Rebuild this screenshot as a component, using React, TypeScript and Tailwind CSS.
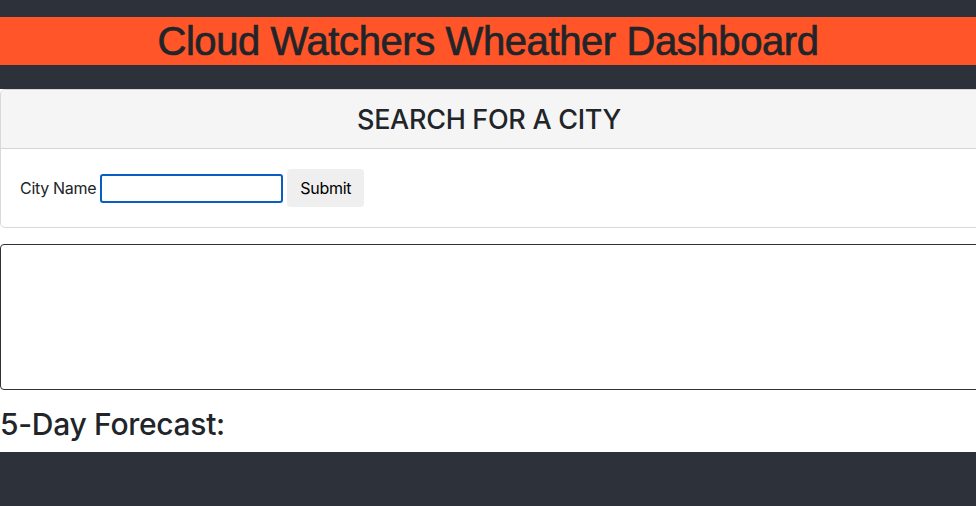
import React from "react";

export default function App() {
  return (
    <div className="w-[976px] min-h-screen overflow-hidden bg-[#2d3139]" style={{ height: 506 }}>
      <div className="h-[17px]" />
      <header className="bg-[#ff5528] h-[48px] flex items-center justify-center">
        <h1
          className="text-[40px] leading-[48px] tracking-[-0.4px] text-[#212529] font-normal [-webkit-text-stroke:0.7px_#212529]"
          style={{ fontFamily: '"Liberation Sans", Arial, sans-serif' }}
        >
          Cloud Watchers Wheather Dashboard
        </h1>
      </header>
      <div className="h-[24px]" />
      <main
        className="bg-white h-[363px] text-[#212529]"
        style={{ fontFamily: 'Inter, "Noto Sans", sans-serif' }}
      >
        <section className="w-[982px] border border-[#d9d9d9] rounded-[5px] overflow-hidden">
          <div className="bg-[#f5f5f5] h-[59px] pr-[4px] border-b border-[#d5d5d5] flex items-center justify-center">
            <h2 className="text-[27px] leading-none font-medium tracking-[-0.3px]">SEARCH FOR A CITY</h2>
          </div>
          <div className="h-[78px] pl-[19px] flex items-center">
            <label className="text-[16px] tracking-[-0.3px] mr-[4px]">City Name</label>
            <input
              type="text"
              className="w-[183px] h-[29px] border-2 border-[#0a5dc2] rounded-[3px] outline-none bg-white"
            />
            <button className="ml-[4px] w-[77px] h-[38px] bg-[#efefef] rounded-[4px] text-[16px] tracking-[-0.3px] text-black">
              Submit
            </button>
          </div>
        </section>
        <div className="mt-[16px] w-[982px] h-[146px] border border-[#2d3139] rounded-[4px]" />
        <h3 className="mt-[16px] text-[30px] leading-[36px] font-medium tracking-[-0.3px]">5-Day Forecast:</h3>
      </main>
    </div>
  );
}
